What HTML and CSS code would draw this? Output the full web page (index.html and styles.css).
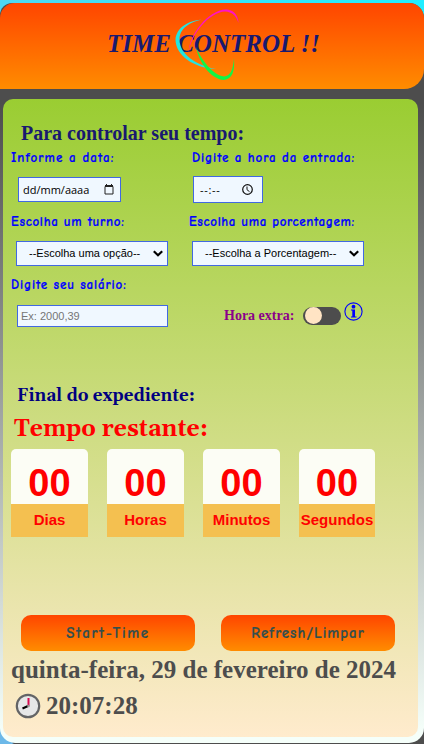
FILE: index.html
```html
<!DOCTYPE html>
<html lang="pt-BR">
<head>
<meta charset="utf-8">
<title>Time Control</title>
<link rel="stylesheet" href="styles.css">
</head>
<body>
<div class="frame">
  <header class="header">
    <h1 class="title">TIME CONTROL !!</h1>
    <svg class="orbits" width="76" height="84" viewBox="168 4 76 84">
      <path fill="#22e5e0" d="M204 19.500C188 20 176 28 175.500 40C176 55 193 68 216 69C195 65 180 54 179.500 40C179 29 190 21 204 19.500Z"/>
      <path fill="#ff12c8" d="M188.500 53C189 35 208 10 226 9.500C233 10 238 14 238.500 23C236 15 232 12 225 11.500C209 12 190.500 35 188.500 53Z"/>
      <path fill="#12f545" d="M196 47C199 62 210 79 224 80C232 79 235 72 234 58C233 71 230 76 224 76.500C213 75 202 61 196 47Z"/>
    </svg>
  </header>
  <main class="panel">
    <h2 class="heading">Para controlar seu tempo:</h2>
    <div class="fields">
      <label class="label l-date">Informe a data:</label>
      <label class="label l-time">Digite a hora da entrada:</label>
      <div class="control date"><span>dd/mm/aaaa</span>
        <svg width="10" height="11" viewBox="0 0 10 11"><path d="M1 2.500h8v7.500h-8zM2.500 0v2M7.500 0v2" fill="none" stroke="#222"/><path d="M1 1h8v2H1z" fill="#222"/></svg>
      </div>
      <div class="control time"><span>--:--</span>
        <svg width="11" height="11" viewBox="0 0 11 11"><circle cx="5.500" cy="5.500" r="4.800" fill="none" stroke="#111" stroke-width="1.200"/><path d="M5 2.500v3.200l2.500 2" fill="none" stroke="#111"/></svg>
      </div>
      <label class="label l-shift">Escolha um turno:</label>
      <label class="label l-percent">Escolha uma porcentagem:</label>
      <div class="control shift"><span>--Escolha uma opção--</span>
        <svg width="10" height="7" viewBox="0 0 10 7"><path d="M.8 1.200L5 5.200l4.200-4" fill="none" stroke="#000" stroke-width="2.200"/></svg>
      </div>
      <div class="control percent"><span>--Escolha a Porcentagem--</span>
        <svg width="10" height="7" viewBox="0 0 10 7"><path d="M.8 1.200L5 5.200l4.200-4" fill="none" stroke="#000" stroke-width="2.200"/></svg>
      </div>
      <label class="label l-salary">Digite seu salário:</label>
      <div class="control salary"><span>Ex: 2000,39</span></div>
      <div class="extra">
        <span class="extra-label">Hora extra:</span>
        <span class="switch"><span class="knob"></span></span>
        <svg class="info" width="19" height="19" viewBox="0 0 19 19"><circle cx="9.500" cy="9.500" r="8.600" fill="none" stroke="#00f" stroke-width="1.100"/><circle cx="9.500" cy="4.700" r="1.900" fill="#00f"/><path fill="#00f" d="M7 7.500h4v7h1.500v1H7v-1h1.300v-6H7z"/></svg>
      </div>
    </div>
    <h3 class="end">Final do expediente:</h3>
    <h2 class="remaining">Tempo restante:</h2>
    <div class="counters">
      <div class="counter"><div class="number">00</div><div class="unit">Dias</div></div>
      <div class="counter"><div class="number">00</div><div class="unit">Horas</div></div>
      <div class="counter"><div class="number">00</div><div class="unit">Minutos</div></div>
      <div class="counter"><div class="number">00</div><div class="unit">Segundos</div></div>
    </div>
    <div class="buttons">
      <button class="button start">Start-Time</button>
      <button class="button refresh">Refresh/Limpar</button>
    </div>
    <div class="today">quinta-feira, 29 de fevereiro de 2024</div>
    <div class="clock">
      <svg width="26" height="26" viewBox="0 0 26 26"><circle cx="13" cy="13" r="11.200" fill="#e6e7e8" stroke="#636466" stroke-width="2.200"/><path d="M13.500 5v8" stroke="#d80b50" stroke-width="2"/><path d="M13 13l-5.500 2.500" stroke="#000" stroke-width="2"/><circle cx="13.500" cy="13" r="1.300" fill="#999"/></svg>
      <span>20:07:28</span>
    </div>
  </main>
</div>
</body>
</html>
```
FILE: styles.css
```css
* { box-sizing: border-box; }
body {
  margin: 0;
  height: 744px;
  overflow: hidden;
  padding-top: 3px;
  background: linear-gradient(90deg, #4ed8f2, #20edff) top / 100% 30px no-repeat, linear-gradient(90deg, #6cb8e8 12px, #4d4d4d 14px);
}
.frame {
  height: 740px;
  border-radius: 12px 15px 15px 15px;
  background: linear-gradient(#4d4d4d 0, #4d4d4d 100px, #f5fffa 730px);
}
.header {
  position: relative;
  height: 86px;
  border-radius: 15px 15px 20px 0;
  background: linear-gradient(#ff4500, #ff8c00);
}
.title {
  margin: 0;
  padding: 26px 0 0 107px;
  font: italic bold 25px/30px "Liberation Serif", serif;
  color: #191970;
  white-space: nowrap;
}
.orbits { position: absolute; left: 168px; top: 1px; }
.panel {
  margin: 10px 6px 0 3px;
  height: 638px;
  padding-top: 22px;
  border-radius: 10px;
  background: linear-gradient(#9acd32, #ffebcd);
  overflow: hidden;
}
.heading {
  margin: 0 0 1px 18px;
  font: bold 20px/24px "Liberation Serif", serif;
  color: #191970;
}
.fields {
  display: grid;
  grid-template-columns: 178px 1fr;
  grid-template-rows: 24px 38px 26px 38px 24px 40px;
  padding-left: 8px;
  align-items: center;
}
.label {
  font: bold 13px/18px "Comic Sans MS", "Comic Neue", "Open Sans", sans-serif;
  color: #00f;
  -webkit-text-stroke: .2px #00f;
  white-space: nowrap;
}
.l-date { letter-spacing: 1.07px; }
.l-time { padding-left: 3px; letter-spacing: .9px; }
.l-shift { letter-spacing: .7px; }
.l-percent { letter-spacing: .64px; }
.l-shift, .l-percent, .l-salary { padding-top: 1px; }
.l-salary { grid-column: 1 / 3; letter-spacing: .86px; }
.control {
  display: flex;
  align-items: center;
  justify-content: space-between;
  border: 1px solid #4169e1;
  background: #f0f8ff;
  color: #000;
  font: 11px/13px "Liberation Sans", sans-serif;
  white-space: nowrap;
}
.date { width: 103px; height: 25px; margin-left: 7px; padding: 0 6px 0 4px; font-family: "Open Sans", sans-serif; }
.time { width: 70px; height: 27px; margin-left: 4px; padding: 0 9px 0 6px; font-family: "Open Sans", sans-serif; letter-spacing: .7px; }
.shift { width: 152px; height: 25px; margin-left: 5px; padding: 0 4px 0 12px; }
.percent { width: 172px; height: 25px; margin-left: 3px; padding: 0 4px 0 12px; }
.salary { width: 151px; height: 22px; margin-left: 6px; padding-left: 3px; color: #757575; }
.extra { display: flex; align-items: center; padding-left: 35px; }
.extra-label { width: 79px; font: bold 14px/18px "Liberation Serif", serif; color: #8b008b; white-space: nowrap; }
.switch { width: 38px; height: 18px; border-radius: 9px; background: #4d4d4d; padding: 0 2px; }
.knob { display: block; width: 17px; height: 17px; border-radius: 50%; background: #ffe4c4; }
.info { margin: -10px 0 0 3px; }
.end {
  margin: 48px 0 0 14px;
  font: bold 17px/24px Gelasio, "DejaVu Serif", serif;
  color: #000080;
}
.remaining {
  margin: 8px 0 0 11px;
  font: bold 23px/28px Gelasio, "DejaVu Serif", serif;
  color: #f00;
}
.counters { display: flex; gap: 19px; margin: 5px 0 0 8px; }
.counter {
  width: 77px;
  height: 88px;
  border-radius: 5px 5px 0 0;
  overflow: hidden;
  text-align: center;
  color: #f00;
  background: #fcfdf5;
  font-family: "Liberation Sans", sans-serif;
  font-weight: bold;
}
.counter:last-child { width: 76px; }
.number { height: 55px; padding-top: 12px; font-size: 38px; line-height: 44px; }
.unit { height: 33px; background: #f4c050; font-size: 15px; line-height: 31px; }
.buttons { display: flex; gap: 26px; margin: 78px 0 0 18px; }
.button {
  width: 174px;
  height: 36px;
  padding: 0;
  border: 0;
  border-radius: 10px;
  background: linear-gradient(#ff4500, #ff8c00);
  color: #2f4f4f;
  font: bold 15px "Comic Sans MS", "Comic Neue", "Open Sans", sans-serif;
  -webkit-text-stroke: .2px #2f4f4f;
}
.start { letter-spacing: 1.6px; }
.refresh { letter-spacing: 1px; }
.today {
  margin: 4px 0 0 8px;
  font: bold 25px/30px "Liberation Serif", serif;
  color: #4d4d4d;
  white-space: nowrap;
}
.clock {
  display: flex;
  align-items: center;
  gap: 5px;
  margin: 6px 0 0 12px;
  font: bold 25px/30px "Liberation Serif", serif;
  color: #4d4d4d;
}
```
